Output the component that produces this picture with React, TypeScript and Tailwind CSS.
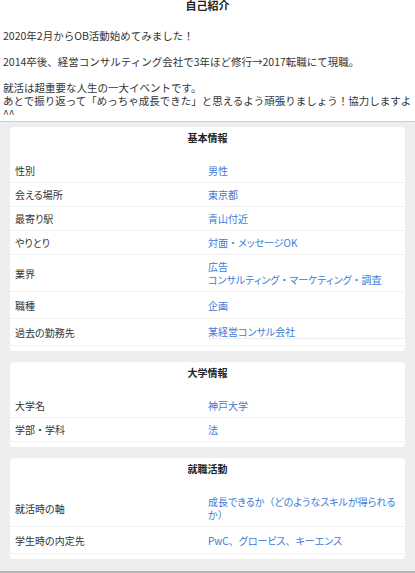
import React from 'react';

type Row = { label: string; value: React.ReactNode; h?: 'one' | 'two' | 'tall'; underline?: boolean };

const heights = { one: 'h-[24px]', two: 'h-[37px]', tall: 'h-[27px]' };

// kana are proportional, but dots, commas and brackets stay full width
const fw = (text: string) =>
  text.split(/([・、（）])/).map((part, i) =>
    /^[・、（）]$/.test(part) ? (
      <span key={i} className="[font-feature-settings:normal]">
        {part}
      </span>
    ) : (
      part
    )
  );

const Section = ({ title, rows }: { title: string; rows: Row[] }) => (
  <div className="bg-white rounded-[4px] pb-[5px]">
    <div className="h-[32px] pt-[5px] text-center text-[10px] leading-[12px] font-bold text-[#222]">{title}</div>
    <div>
      {rows.map((r) => (
        <div
          key={r.label}
          className={`flex items-center border-b border-[#f1f1f1] overflow-hidden ${heights[r.h ?? 'one']}`}
        >
          <div className="w-[198px] shrink-0 pl-[5px] text-[#333]">{fw(r.label)}</div>
          <div className={`flex-1 pr-[6px] text-[#3d7bd6] ${r.underline ? 'border-b border-[#eeeeee]' : ''}`}>
            {typeof r.value === 'string' ? fw(r.value) : r.value}
          </div>
        </div>
      ))}
    </div>
  </div>
);

export default function App() {
  return (
    <div
      className="w-[415px] min-h-[573px] bg-white text-[10px] leading-[13px] [font-feature-settings:'palt']"
      style={{ fontFamily: '"Noto Sans CJK JP", "Noto Sans", sans-serif' }}
    >
      <div className="px-[3px]">
        <div className="text-center text-[11px] leading-[11px] font-bold text-[#222]">自己紹介</div>
        <p className="mt-[18px] pb-[1px] text-[10.5px] leading-[13px] text-[#333] [font-feature-settings:normal]">
          2020年2月からOB活動始めてみました！
          <br />
          <br />
          2014卒後、経営コンサルティング会社で3年ほど修行→2017転職にて現職。
          <br />
          <br />
          就活は超重要な人生の一大イベントです。
          <br />
          あとで振り返って「めっちゃ成長できた」と思えるよう頑張りましょう！協力しますよ
          <br />
          ^^
        </p>
      </div>
      <div className="border-t border-[#cccccc] border-b-2 border-b-[#b5b5b5] bg-[#eeeeee] px-[10px] pt-[5px] pb-[12px] flex flex-col gap-[11px]">
        <Section
          title="基本情報"
          rows={[
            { label: '性別', value: '男性' },
            { label: '会える場所', value: '東京都' },
            { label: '最寄り駅', value: '青山付近' },
            { label: 'やりとり', value: '対面・メッセージOK' },
            {
              label: '業界',
              h: 'two',
              value: (
                <>
                  広告
                  <br />
                  {fw('コンサルティング・マーケティング・調査')}
                </>
              ),
            },
            { label: '職種', value: '企画', h: 'tall' },
            { label: '過去の勤務先', value: '某経営コンサル会社', h: 'tall', underline: true },
          ]}
        />
        <Section
          title="大学情報"
          rows={[
            { label: '大学名', value: '神戸大学' },
            { label: '学部・学科', value: '法' },
          ]}
        />
        <Section
          title="就職活動"
          rows={[
            {
              label: '就活時の軸',
              h: 'two',
              value: (
                <>
                  {fw('成長できるか（どのようなスキルが得られる')}
                  <br />
                  {fw('か）')}
                </>
              ),
            },
            { label: '学生時の内定先', value: 'PwC、グロービス、キーエンス', h: 'tall' },
          ]}
        />
      </div>
    </div>
  );
}
